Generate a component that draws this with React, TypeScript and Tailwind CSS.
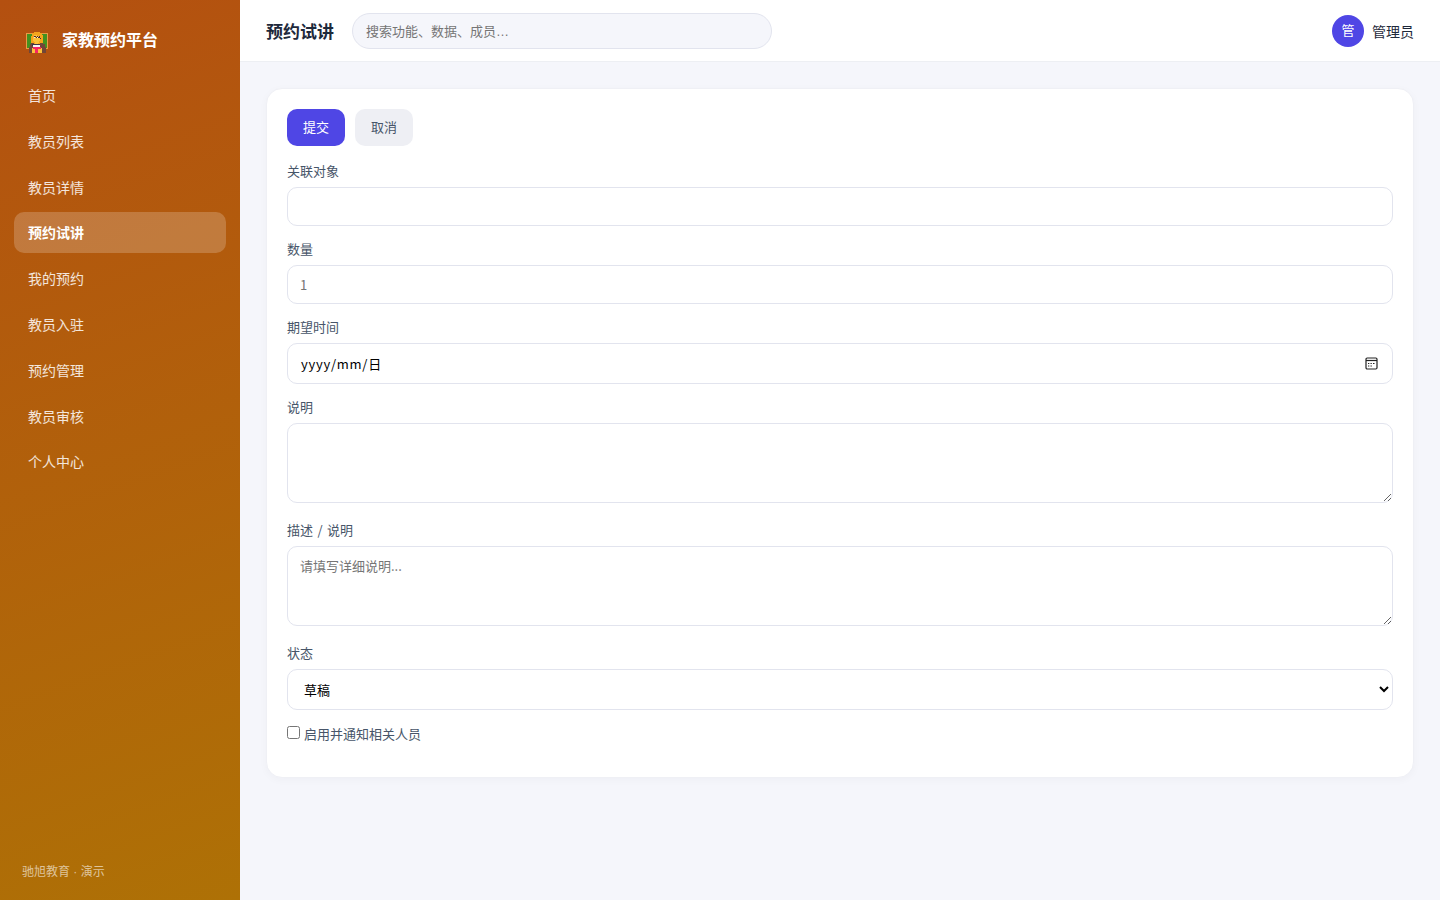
const navItems = ["首页", "教员列表", "教员详情", "预约试讲", "我的预约", "教员入驻", "预约管理", "教员审核", "个人中心"];

const fieldClass = "block w-full rounded-[10px] border border-[#e2e4ee] bg-white px-3 text-[13px] text-black";

function TeacherIcon() {
  return (
    <svg width="22" height="22" viewBox="0 0 22 22" shapeRendering="crispEdges">
      <path fill="#e89a45" d="M0 2h22v16H0z" />
      <path fill="#43911f" d="M1 3h20v14H1z" />
      <path fill="#f5a31c" d="M8 1h6v1h2v2h1v8h-2v1H7v-1H5V5h1V2h2z" />
      <path fill="#fbc13a" d="M8 4h3v1h3v5h-1v2h-1v1h-3v-2H8v-1H7V6h1z" />
      <path fill="#4b2b35" d="M8 5h2v1H8zM11 5h1v1h-1zM13 5h1v1h-1zM10 6h1v1h-1zM12 6h2v1h-2zM14 7h1v1h-1z" />
      <path fill="#fff4d6" d="M8 6h1v1H8zM11 6h1v1h-1z" />
      <path fill="#704638" d="M5 12h3v1h6v-1h3v1h2v3h1v6H3v-6h1v-3h1z" />
      <path fill="#3c3547" d="M6 13h8v2H6z" />
      <path fill="#f5f2f2" d="M7 14h7v2H7z" />
      <path fill="#fbc13a" d="M6 17h10v5H6z" />
      <path fill="#f72465" d="M7 16h8v2h-3v4H9v-4H7z" />
    </svg>
  );
}

function Sidebar() {
  return (
    <aside className="flex w-60 shrink-0 flex-col bg-[linear-gradient(160deg,#b45010_0%,#ae7106_100%)] px-3.5 pt-5 pb-[18px] text-white">
      <div className="flex h-10 items-center gap-3.5 px-3">
        <div className="pt-1">
          <TeacherIcon />
        </div>
        <span className="pb-0.5 text-[16px] font-bold">家教预约平台</span>
      </div>
      <nav className="mt-[15px] flex flex-col gap-[4.8px]">
        {navItems.map((item) => (
          <a
            key={item}
            className={
              item === "预约试讲"
                ? "flex h-[41px] items-center rounded-[10px] bg-white/20 px-3.5 pb-px text-sm font-bold"
                : "flex h-[41px] items-center rounded-[10px] px-3.5 pb-px text-sm text-white/85"
            }
          >
            {item}
          </a>
        ))}
      </nav>
      <div className="mt-auto px-2 font-['Liberation_Sans','Noto_Sans_CJK_SC',sans-serif] text-[12px] leading-5 text-white/60">驰旭教育 · 演示</div>
    </aside>
  );
}

function Header() {
  return (
    <header className="flex h-[62px] shrink-0 items-center border-b border-[#edeff3] bg-white px-[26px]">
      <h1 className="text-[17px] font-bold text-[#1e293b]">预约试讲</h1>
      <input
        placeholder="搜索功能、数据、成员…"
        className="ml-[18px] h-9 w-[420px] rounded-full border border-[#e2e4ee] bg-[#f5f6fb] px-[13px] pt-px font-['Liberation_Sans','Noto_Sans_CJK_SC',sans-serif] text-[13px] placeholder:text-[#757575]"
      />
      <div className="ml-auto flex items-center gap-2 text-sm text-[#1e293b]">
        <span className="flex size-8 items-center justify-center rounded-full bg-[#4f46e5] text-[13px] text-white">管</span>
        管理员
      </div>
    </header>
  );
}

function Label({ text }: { text: string }) {
  return <label className="mb-[7px] block text-[13px] leading-[18px] text-[#475569] [word-spacing:1.5px]">{text}</label>;
}

export default function App() {
  return (
    <div className="flex h-screen overflow-hidden bg-[#f5f6fb] font-['Noto_Sans_CJK_SC',sans-serif]">
      <Sidebar />
      <div className="flex min-w-0 flex-1 flex-col">
        <Header />
        <main className="p-[26px]">
          <div className="h-[690px] rounded-2xl border border-[#eff0f5] bg-white p-5 shadow-[0_2px_8px_rgba(30,41,59,0.03)]">
            <div className="mb-4 flex gap-2.5 text-[13px]">
              <button className="h-[37px] w-[58px] rounded-[10px] bg-[#4f46e5] pb-px text-white">提交</button>
              <button className="h-[37px] w-[58px] rounded-[10px] bg-[#eeeff4] pb-px text-[#475569]">取消</button>
            </div>
            <div className="mb-3.5">
              <Label text="关联对象" />
              <input className={`${fieldClass} h-[39px]`} />
            </div>
            <div className="mb-3.5">
              <Label text="数量" />
              <input placeholder="1" className={`${fieldClass} h-[39px] placeholder:text-[#757575]`} />
            </div>
            <div className="mb-3.5">
              <Label text="期望时间" />
              <div className={`${fieldClass} h-[41px]`}>
                <div className="flex h-full items-center justify-between pr-0.5 pl-px">
                  <span className="tracking-[0.75px]">yyyy/mm/日</span>
                  <svg width="13" height="13" viewBox="0 0 13 13" fill="none" stroke="#222">
                    <rect x="1" y="1" width="11" height="11" rx="1.2" strokeWidth="1.2" />
                    <path d="M1 3.5h11" strokeWidth="1.2" />
                    <path d="M5.5 6.5h1.3M8 6.5h1.5M3 6.5h1.3M3 9h1.3M5.5 9h1.3" strokeWidth="1.2" />
                  </svg>
                </div>
              </div>
            </div>
            <div className="mb-[18px]">
              <Label text="说明" />
              <textarea className={`${fieldClass} h-20 resize-y py-2`} />
            </div>
            <div className="mb-[18px]">
              <Label text="描述 / 说明" />
              <textarea placeholder="请填写详细说明..." className={`${fieldClass} h-20 resize-y py-[9px] placeholder:text-[#757575]`} />
            </div>
            <div className="mb-3.5">
              <Label text="状态" />
              <select className={`${fieldClass} h-[41px] pr-0 pb-px`}>
                <option>草稿</option>
              </select>
            </div>
            <label className="flex h-5 items-center gap-1 text-[13px] text-[#475569]">
              <input type="checkbox" className="mb-[3px] size-[13px]" />
              启用并通知相关人员
            </label>
          </div>
        </main>
      </div>
    </div>
  );
}
